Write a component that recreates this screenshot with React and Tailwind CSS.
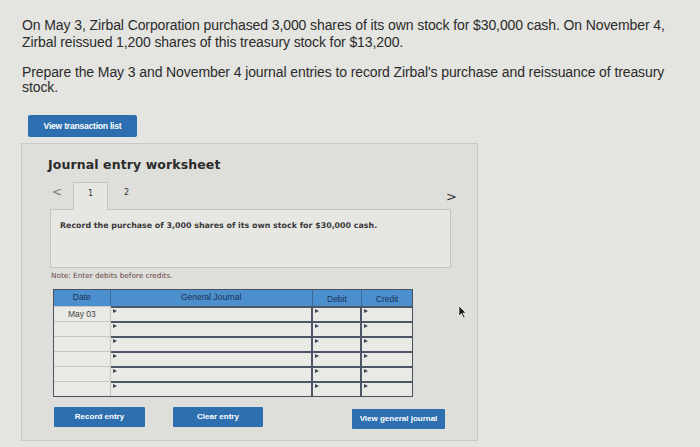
import React from "react";

const rows = ["May 03", "", "", "", "", ""];

function Cell({ className = "", children }) {
  return (
    <div className={`relative h-[15px] ${className}`}>
      <span className="absolute left-[2px] top-[1px] h-0 w-0 border-y-[2px] border-l-[4px] border-y-transparent border-l-[#3b4656]" />
      {children}
    </div>
  );
}

export default function App() {
  return (
    <div className="relative h-[447px] w-[700px] overflow-hidden bg-[#e4e4e1] font-['Liberation_Sans',Arial,sans-serif] text-[#2b2b2b]">
      <div className="pl-[22px] pr-[30px] pt-[17px]">
        <p className="text-[14px] leading-[17px] tracking-[-0.1px]">
          On May 3, Zirbal Corporation purchased 3,000 shares of its own stock for $30,000 cash. On November 4,
          Zirbal reissued 1,200 shares of this treasury stock for $13,200.
        </p>
        <p className="mt-[14px] text-[14px] leading-[15px] tracking-[-0.1px]">
          Prepare the May 3 and November 4 journal entries to record Zirbal's purchase and reissuance of treasury
          stock.
        </p>
      </div>

      <button className="ml-[28px] mt-[20px] flex h-[22px] w-[109px] items-center justify-center rounded-[2px] bg-[#2c6eb0] text-[8.5px] font-bold tracking-[-0.2px] text-white">
        View transaction list
      </button>

      <div className="ml-[21px] mt-[6px] h-[298px] w-[457px] border border-[#c9c9c5] bg-[#dededb] pl-[26px]">
        <h2 className="mt-[12px] font-['DejaVu_Sans',Verdana,sans-serif] text-[12.5px] font-bold tracking-[0.1px] text-[#2a2a2a]">
          Journal entry worksheet
        </h2>

        <div className="mt-[7px] flex h-[27px] items-stretch pr-[20px] font-['DejaVu_Sans',Verdana,sans-serif]">
          <span className="ml-[4px] mt-[1px] text-[12px] text-[#777]">&lt;</span>
          <div className="relative z-10 ml-[11px] flex h-[28px] w-[35px] justify-center border border-b-0 border-[#c4c4c0] bg-[#e6e6e3] pt-[5px] text-[8px] text-[#333]">
            1
          </div>
          <span className="ml-[16px] pt-[5px] text-[8px] text-[#333]">2</span>
          <span className="ml-auto mt-[5px] text-[13px] text-[#333]">&gt;</span>
        </div>

        <div className="ml-[2px] h-[59px] w-[401px] border border-[#c4c4c0] bg-[#e6e6e3] pl-[9px] pt-[10px] font-['DejaVu_Sans',Verdana,sans-serif] text-[7.9px] font-bold text-[#3a3a3a]">
          Record the purchase of 3,000 shares of its own stock for $30,000 cash.
        </div>

        <p className="ml-[3px] mt-[3px] font-['DejaVu_Sans',Verdana,sans-serif] text-[7.3px] text-[#6a4a45]">
          Note: Enter debits before credits.
        </p>

        <div className="ml-[5px] mt-[7px] w-[360px] border border-[#4a5260] bg-[#e9e9e6] text-[8.5px]">
          <div className="flex h-[16px] bg-[#4c8fcf] text-[#1c3152]">
            <div className="w-[57px] border-r border-[#3a6a99] pt-[1px] text-center">Date</div>
            <div className="w-[203px] border-r border-[#3a6a99] pt-[1px] text-center">General Journal</div>
            <div className="w-[50px] border-r border-[#3a6a99] pt-[3px] text-center">Debit</div>
            <div className="w-[50px] pt-[3px] text-center">Credit</div>
          </div>
          {rows.map((d, i) => (
            <div key={i} className="flex">
              <div className="h-[15px] w-[57px] border-t border-r border-[#c5c5c1] pt-[1px] text-center text-[8.5px] text-[#444]">
                {d}
              </div>
              <Cell className="w-[203px] border-t-2 border-r-2 border-[#4d5666]" />
              <Cell className="w-[50px] border-t-2 border-r-2 border-[#4d5666]" />
              <Cell className="w-[50px] border-t-2 border-[#4d5666]" />
            </div>
          ))}
        </div>

        <div className="mt-[10px] flex items-start">
          <button className="ml-[6px] h-[20px] w-[91px] rounded-[1px] bg-[#2e6fb0] text-[8px] font-bold text-white">
            Record entry
          </button>
          <button className="ml-[28px] h-[20px] w-[90px] rounded-[1px] bg-[#2e6fb0] text-[8px] font-bold text-white">
            Clear entry
          </button>
          <button className="ml-[89px] mt-[2px] h-[20px] w-[93px] rounded-[1px] bg-[#2e6fb0] text-[8px] font-bold text-white">
            View general journal
          </button>
        </div>
      </div>

      <svg className="absolute left-[458px] top-[305px]" width="9" height="14" viewBox="0 0 9 14">
        <path d="M1 1 L1 11 L3.5 8.5 L5.5 13 L7 12.3 L5 8 L8 8 Z" fill="#1a1a1a" stroke="#fff" strokeWidth="0.6" />
      </svg>
    </div>
  );
}
